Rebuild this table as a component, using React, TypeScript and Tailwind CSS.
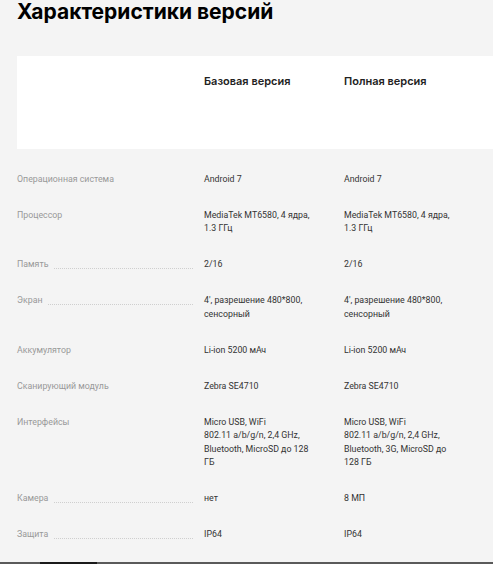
const rows: { label: string; dots: boolean; base: string[]; full: string[] }[] = [
  { label: "Операционная система", dots: false, base: ["Android 7"], full: ["Android 7"] },
  { label: "Процессор", dots: false, base: ["MediaTek MT6580, 4 ядра,", "1.3 ГГц"], full: ["MediaTek MT6580, 4 ядра,", "1.3 ГГц"] },
  { label: "Память", dots: true, base: ["2/16"], full: ["2/16"] },
  { label: "Экран", dots: true, base: ["4', разрешение 480*800,", "сенсорный"], full: ["4', разрешение 480*800,", "сенсорный"] },
  { label: "Аккумулятор", dots: false, base: ["Li-ion 5200 мАч"], full: ["Li-ion 5200 мАч"] },
  { label: "Сканирующий модуль", dots: false, base: ["Zebra SE4710"], full: ["Zebra SE4710"] },
  {
    label: "Интерфейсы",
    dots: false,
    base: ["Micro USB, WiFi", "802.11 a/b/g/n, 2,4 GHz,", "Bluetooth, MicroSD до 128", "ГБ"],
    full: ["Micro USB, WiFi", "802.11 a/b/g/n, 2,4 GHz,", "Bluetooth, 3G, MicroSD до", "128 ГБ"],
  },
  { label: "Камера", dots: true, base: ["нет"], full: ["8 МП"] },
  { label: "Защита", dots: true, base: ["IP64"], full: ["IP64"] },
];

const Lines = ({ lines }: { lines: string[] }) => (
  <div className="w-[140px] shrink-0 text-[#333]">
    {lines.map((l, i) => (
      <div key={i} className="whitespace-nowrap">{l}</div>
    ))}
  </div>
);

const App = () => {
  return (
    <div className="w-[493px] h-[564px] overflow-hidden bg-[#f4f4f4] flex flex-col relative">
      <h2 className="pl-[17px] -mt-[1px] text-[21px] leading-[26px] font-bold text-black font-['Inter',sans-serif]">
        Характеристики версий
      </h2>

      <div className="ml-[17px] mt-[31px] h-[94px] bg-white flex pt-[17px] font-['Inter',sans-serif] text-[11px] font-semibold text-[#222]">
        <div className="w-[187px] shrink-0" />
        <div className="w-[140px] shrink-0">Базовая версия</div>
        <div className="w-[140px] shrink-0">Полная версия</div>
      </div>

      <div className="pl-[17px] pt-[24px] flex flex-col font-['Roboto',sans-serif] text-[8.8px] leading-[13.4px]">
        {rows.map((r) => (
          <div key={r.label} className="flex pb-[22.6px]">
            <div className="w-[176px] shrink-0 flex items-start text-[#999]">
              <span className="whitespace-nowrap">{r.label}</span>
              {r.dots && <span className="flex-1 ml-[6px] mt-[10px] border-b border-dotted border-[#cfcfcf]" />}
            </div>
            <div className="w-[11px] shrink-0" />
            <Lines lines={r.base} />
            <Lines lines={r.full} />
          </div>
        ))}
      </div>

      <div className="absolute bottom-0 left-0 w-full h-[2px] bg-[#5a5a5a]">
        <div className="ml-[40px] w-[57px] h-full bg-[#1a1a1a]" />
      </div>
    </div>
  );
};

export default App;
